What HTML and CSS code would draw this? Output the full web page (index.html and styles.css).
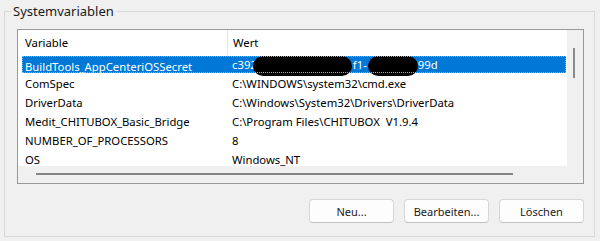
FILE: index.html
```html
<!DOCTYPE html>
<html lang="de">
<head>
    <meta charset="UTF-8">
    <title>Systemvariablen</title>
    <link rel="stylesheet" href="styles.css">
</head>
<body>
    <fieldset class="group">
        <legend>Systemvariablen</legend>
        <div class="listbox">
            <div class="list">
                <div class="head">
                    <div class="col">Variable</div>
                    <div class="col col-wert">Wert</div>
                </div>
                <div class="row sel">
                    <div class="col">BuildTools_AppCenteriOSSecret</div>
                    <div class="col col-wert">c392<span class="blob blob-a"></span>f1-<span class="blob blob-b"></span>99d</div>
                </div>
                <div class="row">
                    <div class="col">ComSpec</div>
                    <div class="col col-wert">C:\WINDOWS\system32\cmd.exe</div>
                </div>
                <div class="row">
                    <div class="col">DriverData</div>
                    <div class="col col-wert">C:\Windows\System32\Drivers\DriverData</div>
                </div>
                <div class="row">
                    <div class="col">Medit_CHITUBOX_Basic_Bridge</div>
                    <div class="col col-wert">C:\Program Files\CHITUBOX&nbsp; V1.9.4</div>
                </div>
                <div class="row">
                    <div class="col">NUMBER_OF_PROCESSORS</div>
                    <div class="col col-wert">8</div>
                </div>
                <div class="row">
                    <div class="col">OS</div>
                    <div class="col col-wert">Windows_NT</div>
                </div>
            </div>
            <div class="vscroll"><div class="vthumb"></div></div>
            <div class="hscroll"><div class="hthumb"></div></div>
            <div class="corner"></div>
        </div>
        <div class="buttons">
            <button>Neu...</button>
            <button>Bearbeiten...</button>
            <button>Löschen</button>
        </div>
    </fieldset>
</body>
</html>
```

FILE: styles.css
```css
body {
    margin: 0;
    background: #f0f0f0;
    font-family: "Noto Sans", "Open Sans", sans-serif;
    font-size: 11.3px;
    color: #000;
}
.group {
    margin: 1px 5px 0 4px;
    border: 1px solid #dadada;
    padding: 0 10px 13px 12px;
}
.group legend {
    margin-left: -6px;
    padding: 0 2px;
    line-height: 20px;
    font-size: 13px;
    color: #1a1a1a;
}
.listbox {
    margin-top: 8px;
    height: 155px;
    box-sizing: border-box;
    border: 1px solid #999;
    display: grid;
    grid-template-columns: 1fr 16px;
    grid-template-rows: 1fr 17px;
}
.list {
    background: #fff;
    overflow: hidden;
    padding-left: 4px;
}
.head, .row {
    display: grid;
    grid-template-columns: 205px 1fr;
    align-items: center;
    white-space: nowrap;
}
.head {
    height: 25px;
    margin-left: -4px;
    padding-left: 4px;
}
.head .col-wert {
    border-left: 1px solid #e5e5e5;
    height: 25px;
    line-height: 25px;
}
.row {
    height: 19px;
    margin-right: 1px;
}
.col {
    padding-left: 3px;
}
.col-wert {
    padding-left: 5px;
}
.row.sel {
    height: 17px;
    margin-top: 1px;
    margin-bottom: 1px;
    background: #0078d7;
    color: #fff;
    outline: 1px dotted #7fb4e0;
    outline-offset: -1px;
}
.blob {
    display: inline-block;
    vertical-align: middle;
    height: 20px;
    background: #000;
    border-radius: 10px;
}
.blob-a {
    width: 99px;
    margin-left: -4px;
    margin-right: 1px;
}
.blob-b {
    width: 50px;
    margin-left: 1px;
}
.vscroll {
    background: #f0f0f0;
    padding: 18px 0 0 6px;
}
.vthumb {
    width: 2px;
    height: 30px;
    background: #8a8a8a;
}
.hscroll {
    background: #f0f0f0;
    padding: 7px 0 0 18px;
}
.hthumb {
    width: 477px;
    height: 2px;
    background: #858585;
}
.corner {
    background: #f0f0f0;
}
.buttons {
    display: flex;
    justify-content: flex-end;
    gap: 10px;
    margin-top: 15px;
}
.buttons button {
    width: 85px;
    height: 24px;
    font-family: inherit;
    font-size: 11px;
    color: #1a1a1a;
    background: #fdfdfd;
    border: 1px solid #d6d6d6;
    border-bottom-color: #c2c2c2;
    border-radius: 4px;
}
```
